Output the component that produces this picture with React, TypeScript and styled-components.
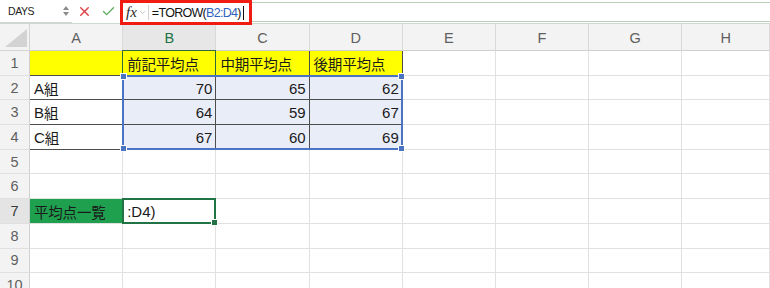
import React from 'react'
import styled, { createGlobalStyle, css } from 'styled-components'
import { X, Check, ChevronDown } from 'lucide-react'

const GlobalStyle = createGlobalStyle`
  html, body {
    margin: 0;
    padding: 0;
    background: #ffffff;
    overflow: hidden;
  }
  body {
    font-family: "Liberation Sans", "Noto Sans CJK JP", sans-serif;
  }
`

const COL_W = 93.2
const ROW_H = 24.7

const Page = styled.div`
  width: 770px;
  height: 288px;
  overflow: hidden;
  display: flex;
  flex-direction: column;
`

const Toolbar = styled.div`
  height: 23px;
  display: flex;
  align-items: stretch;
  border-bottom: 1px solid #cfd8cf;
  background: #ffffff;
`

const NameBox = styled.div`
  width: 72px;
  display: flex;
  align-items: center;
  justify-content: space-between;
  padding: 0 3px 0 8px;
  box-sizing: border-box;
  font-size: 10.5px;
  letter-spacing: -0.4px;
  color: #222;
  border-bottom: 1px solid #d6d6d6;
`

const Spinner = styled.div`
  display: flex;
  flex-direction: column;
  gap: 2px;
`

const IconSlot = styled.div<{ $color: string }>`
  width: 24px;
  display: flex;
  align-items: center;
  justify-content: center;
  color: ${({ $color }) => $color};
  &:first-of-type {
    margin-left: 3px;
  }
`

const Highlight = styled.div`
  width: 132px;
  height: 25px;
  box-sizing: border-box;
  border: 3px solid #f01c12;
  background: #fff;
  display: flex;
  align-items: center;
  padding-left: 3px;
  position: relative;
  z-index: 2;
`

const Fx = styled.span`
  font-family: "Liberation Serif", serif;
  font-style: italic;
  font-size: 15px;
  color: #2a2a2a;
  margin-right: 1px;
`

const Divider = styled.div`
  width: 1px;
  height: 15px;
  background: #cfcfcf;
  margin: 0 3px 0 1px;
`

const FormulaText = styled.span`
  font-size: 12.5px;
  letter-spacing: -0.7px;
  color: #111;
  white-space: nowrap;
`

const Ref = styled.span`
  color: #2f62c0;
`

const Caret = styled.span`
  display: inline-block;
  width: 1px;
  height: 14px;
  background: #111;
  margin-left: 2px;
  vertical-align: -3px;
`

const FormulaRest = styled.div`
  flex: 1;
  margin-top: 2px;
  height: 18px;
  border-top: 1px solid #b9cdb9;
  border-bottom: 1px solid #b9cdb9;
`

const Sheet = styled.div`
  display: grid;
  grid-template-columns: 30px repeat(7, ${COL_W}px) 1fr;
  grid-template-rows: 27px repeat(10, ${ROW_H}px);
`

const Place = css<{ $row: number; $col: number; $rowSpan?: number; $colSpan?: number }>`
  grid-row: ${({ $row, $rowSpan = 1 }) => `${$row} / span ${$rowSpan}`};
  grid-column: ${({ $col, $colSpan = 1 }) => `${$col} / span ${$colSpan}`};
`

const Corner = styled.div<{ $row: number; $col: number }>`
  ${Place};
  background: #f3f3f3;
  border-right: 1px solid #d4d4d4;
  border-bottom: 1px solid #d4d4d4;
  display: flex;
  align-items: flex-end;
  justify-content: flex-end;
  padding: 0 2px 3px 0;
`

const ColHead = styled.div<{ $row: number; $col: number; $active?: boolean }>`
  ${Place};
  background: ${({ $active }) => ($active ? '#e7e7e7' : '#f3f3f3')};
  color: ${({ $active }) => ($active ? '#217346' : '#5f5f5f')};
  border-right: 1px solid #d9d9d9;
  border-bottom: 1px solid #d0d0d0;
  display: flex;
  align-items: center;
  justify-content: center;
  font-size: 14.5px;
  padding-top: 1px;
`

const RowHead = styled.div<{ $row: number; $col: number; $active?: boolean }>`
  ${Place};
  background: ${({ $active }) => ($active ? '#e4e4e4' : '#f3f3f3')};
  color: ${({ $active }) => ($active ? '#3a3a3a' : '#5f5f5f')};
  border-right: 1px solid #d0d0d0;
  border-bottom: 1px solid #e0e0e0;
  display: flex;
  align-items: center;
  justify-content: center;
  font-size: 14.5px;
`

const Cell = styled.div<{
  $row: number
  $col: number
  $fill?: string
  $align?: 'left' | 'right'
  $boxed?: boolean
}>`
  ${Place};
  box-sizing: border-box;
  background: ${({ $fill }) => $fill || '#ffffff'};
  border-right: 1px solid ${({ $boxed }) => ($boxed ? '#4d4d4d' : '#e1e1e1')};
  border-bottom: 1px solid ${({ $boxed }) => ($boxed ? '#4d4d4d' : '#e1e1e1')};
  display: flex;
  align-items: center;
  justify-content: ${({ $align }) => ($align === 'right' ? 'flex-end' : 'flex-start')};
  padding: 1px 3px 0 4px;
  font-family: "Liberation Sans", "Noto Sans CJK JP", sans-serif;
  font-size: 15px;
  color: #1a1a1a;
  white-space: nowrap;
  overflow: hidden;
`

const JpText = styled.span`
  font-family: "Noto Sans CJK JP", sans-serif;
  font-size: 14.5px;
  letter-spacing: -0.2px;
`

const Outline = styled.div<{
  $row: number
  $col: number
  $rowSpan?: number
  $colSpan?: number
  $color: string
  $width: number
}>`
  ${Place};
  position: relative;
  margin: -1px 0 0 -1px;
  border: ${({ $width, $color }) => `${$width}px solid ${$color}`};
  pointer-events: none;
  z-index: 1;
`

const Handle = styled.span<{ $color: string; $top?: boolean; $left?: boolean }>`
  position: absolute;
  width: 5px;
  height: 5px;
  background: ${({ $color }) => $color};
  border: 1px solid #ffffff;
  ${({ $top }) => ($top ? 'top: -4px;' : 'bottom: -4px;')}
  ${({ $left }) => ($left ? 'left: -4px;' : 'right: -4px;')}
`

const columns = ['A', 'B', 'C', 'D', 'E', 'F', 'G', 'H']

type CellData = { text: string; align?: 'left' | 'right'; fill?: string; jp?: boolean }

const YELLOW = '#ffff00'
const BLUE_FILL = '#e9edf8'
const GREEN_FILL = '#1fa04f'

const data: Record<string, CellData> = {
  A1: { text: '', fill: YELLOW },
  B1: { text: '前記平均点', fill: YELLOW, jp: true },
  C1: { text: '中期平均点', fill: YELLOW, jp: true },
  D1: { text: '後期平均点', fill: YELLOW, jp: true },
  A2: { text: 'A組', jp: true },
  B2: { text: '70', align: 'right', fill: BLUE_FILL },
  C2: { text: '65', align: 'right', fill: BLUE_FILL },
  D2: { text: '62', align: 'right', fill: BLUE_FILL },
  A3: { text: 'B組', jp: true },
  B3: { text: '64', align: 'right', fill: BLUE_FILL },
  C3: { text: '59', align: 'right', fill: BLUE_FILL },
  D3: { text: '67', align: 'right', fill: BLUE_FILL },
  A4: { text: 'C組', jp: true },
  B4: { text: '67', align: 'right', fill: BLUE_FILL },
  C4: { text: '60', align: 'right', fill: BLUE_FILL },
  D4: { text: '69', align: 'right', fill: BLUE_FILL },
  A7: { text: '平均点一覧', fill: GREEN_FILL, jp: true },
  B7: { text: ':D4)' },
}

const renderText = (d?: CellData) => {
  if (!d || !d.text) return null
  if (!d.jp) return d.text
  // Latin letters inside the label ("A組") stay in the Latin face
  const m = d.text.match(/^([A-Z]?)(.*)$/)
  return (
    <>
      {m && m[1]}
      <JpText>{m ? m[2] : d.text}</JpText>
    </>
  )
}

const FormulaBar = () => (
  <Toolbar>
    <NameBox>
      DAYS
      <Spinner>
        <svg width="6" height="4" viewBox="0 0 6 4">
          <path d="M0 4 L3 0 L6 4 Z" fill="#8a8a8a" />
        </svg>
        <svg width="6" height="4" viewBox="0 0 6 4">
          <path d="M0 0 L3 4 L6 0 Z" fill="#8a8a8a" />
        </svg>
      </Spinner>
    </NameBox>
    <IconSlot $color="#e2464a">
      <X size={15} strokeWidth={2.4} />
    </IconSlot>
    <IconSlot $color="#5aab5e">
      <Check size={15} strokeWidth={2.2} />
    </IconSlot>
    <Highlight>
      <Fx>fx</Fx>
      <ChevronDown size={9} color="#a8a8a8" strokeWidth={1.6} />
      <Divider />
      <FormulaText>
        =TOROW(<Ref>B2:D4</Ref>)<Caret />
      </FormulaText>
    </Highlight>
    <FormulaRest />
  </Toolbar>
)

const App = () => {
  const rows = Array.from({ length: 10 }, (_, i) => i + 1)
  return (
    <Page>
      <GlobalStyle />
      <FormulaBar />
      <Sheet>
        <Corner $row={1} $col={1}>
          <svg width="22" height="18" viewBox="0 0 22 18">
            <path d="M22 0 L22 18 L0 18 Z" fill="#d3d3d3" />
          </svg>
        </Corner>
        {columns.map((c, i) => (
          <ColHead key={c} $row={1} $col={i + 2} $active={c === 'B'}>
            {c}
          </ColHead>
        ))}
        {rows.map((r) => (
          <React.Fragment key={r}>
            <RowHead $row={r + 1} $col={1} $active={r === 7}>
              {r}
            </RowHead>
            {columns.map((c, i) => {
              const d = data[`${c}${r}`]
              const boxed = r <= 4 && i <= 3
              return (
                <Cell
                  key={c}
                  $row={r + 1}
                  $col={i + 2}
                  $fill={d?.fill}
                  $align={d?.align}
                  $boxed={boxed}
                >
                  {renderText(d)}
                </Cell>
              )
            })}
          </React.Fragment>
        ))}
        <Outline $row={2} $col={3} $color="#2d6a3c" $width={1} />
        <Outline $row={3} $col={3} $rowSpan={3} $colSpan={3} $color="#4a73c2" $width={2}>
          <Handle $color="#4a73c2" $top $left />
          <Handle $color="#4a73c2" $top />
          <Handle $color="#4a73c2" $left />
          <Handle $color="#4a73c2" />
        </Outline>
        <Outline $row={8} $col={3} $color="#217346" $width={2}>
          <Handle $color="#217346" />
        </Outline>
      </Sheet>
    </Page>
  )
}

export default App
